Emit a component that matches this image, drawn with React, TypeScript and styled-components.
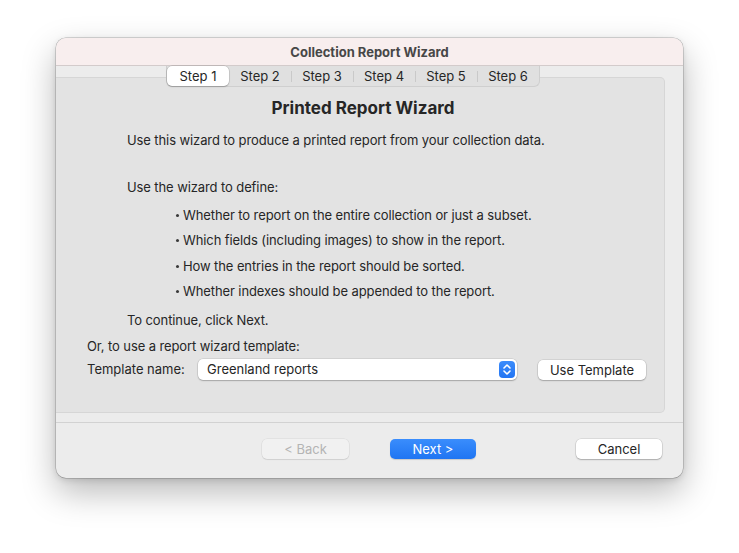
import React from "react";
import styled, { createGlobalStyle } from "styled-components";

const GlobalStyle = createGlobalStyle`
  html, body {
    margin: 0;
    padding: 0;
    background: #ffffff;
  }
  body {
    font-family: Inter, "Liberation Sans", Arial, sans-serif;
    -webkit-font-smoothing: antialiased;
  }
`;

const Page = styled.div`
  width: 739px;
  height: 553px;
  padding: 38px 0 0 56px;
  box-sizing: border-box;
`;

const Window = styled.div`
  width: 627px;
  height: 440px;
  border-radius: 10px;
  overflow: hidden;
  background: #ececec;
  display: flex;
  flex-direction: column;
  box-shadow: 0 0 0 0.5px rgba(0, 0, 0, 0.28), 0 14px 34px rgba(0, 0, 0, 0.28),
    0 2px 6px rgba(0, 0, 0, 0.12);
`;

const TitleBar = styled.div`
  height: 27px;
  flex: none;
  background: #f8eeee;
  border-bottom: 1px solid #d3cbcb;
  display: flex;
  align-items: center;
  justify-content: center;
  font-size: 13px;
  font-weight: 700;
  color: #474747;
`;

const Body = styled.div`
  flex: 1;
  display: flex;
  flex-direction: column;
`;

const TabStrip = styled.div`
  position: relative;
  z-index: 1;
  align-self: flex-start;
  margin: 0 0 -10px 110px;
  height: 20px;
  display: flex;
  align-items: center;
  background: #e0e0e0;
  border: 0.5px solid #cfcfcf;
  border-top: none;
  border-radius: 0 0 6px 6px;
`;

const Tab = styled.div<{ $active?: boolean; $sep?: boolean }>`
  position: relative;
  width: 62px;
  height: 20px;
  display: flex;
  align-items: center;
  justify-content: center;
  font-size: 13px;
  color: #262626;
  border-radius: 5px;
  background: ${(p) => (p.$active ? "#ffffff" : "transparent")};
  box-shadow: ${(p) =>
    p.$active ? "0 0 0 0.5px rgba(0,0,0,0.18), 0 1px 1.5px rgba(0,0,0,0.18)" : "none"};
  &::before {
    content: "";
    display: ${(p) => (p.$sep ? "block" : "none")};
    position: absolute;
    left: 0;
    top: 5px;
    height: 11px;
    width: 1px;
    background: #c9c9c9;
  }
`;

const Panel = styled.div`
  height: 336px;
  margin-right: 18px;
  background: #e3e3e3;
  border: 1px solid #d6d6d6;
  border-left: none;
  border-radius: 0 5px 5px 0;
  box-sizing: border-box;
  padding-top: 20px;
  display: flex;
  flex-direction: column;
`;

const Heading = styled.h1`
  margin: 0;
  height: 20px;
  line-height: 20px;
  font-size: 17px;
  font-weight: 700;
  color: #262626;
  text-align: center;
  padding-left: 6px;
`;

const Para = styled.p<{ $top: number; $indent: number }>`
  margin: ${(p) => p.$top}px 0 0 ${(p) => p.$indent}px;
  height: 16px;
  line-height: 16px;
  font-size: 13px;
  color: #262626;
  letter-spacing: -0.1px;
`;

const Bullets = styled.ul`
  list-style: none;
  margin: 12px 0 0 119px;
  padding: 0;
  display: flex;
  flex-direction: column;
  gap: 9.3px;
`;

const Bullet = styled.li`
  height: 16px;
  line-height: 16px;
  font-size: 13px;
  color: #262626;
  letter-spacing: -0.1px;
  display: flex;
  align-items: center;
  gap: 4px;
`;

const Dot = styled.span`
  width: 3px;
  height: 3px;
  border-radius: 50%;
  background: #3a3a3a;
  margin: 1px 0 0 1px;
`;

const TemplateRow = styled.div`
  margin: 5px 0 0 31px;
  display: flex;
  align-items: center;
  height: 21px;
`;

const Label = styled.span`
  font-size: 13px;
  color: #262626;
  width: 111px;
`;

const Select = styled.div`
  width: 319px;
  height: 21px;
  box-sizing: border-box;
  background: #ffffff;
  border-radius: 5px;
  box-shadow: 0 0 0 0.5px rgba(0, 0, 0, 0.14), 0 1px 1.5px rgba(0, 0, 0, 0.22);
  display: flex;
  align-items: center;
  justify-content: space-between;
  padding: 0 2px 0 9px;
  font-size: 13px;
  color: #262626;
`;

const Stepper = styled.div`
  width: 16px;
  height: 17px;
  border-radius: 4px;
  background: linear-gradient(#3b8cfb, #2375f3);
  display: flex;
  align-items: center;
  justify-content: center;
`;

const Button = styled.div<{ $width: number; $primary?: boolean; $disabled?: boolean }>`
  width: ${(p) => p.$width}px;
  height: 20px;
  box-sizing: border-box;
  border-radius: 5px;
  display: flex;
  align-items: center;
  justify-content: center;
  font-size: 13px;
  color: ${(p) => (p.$primary ? "#ffffff" : p.$disabled ? "#b4b4b4" : "#262626")};
  background: ${(p) =>
    p.$primary
      ? "linear-gradient(#3a8dfc, #1f75f2)"
      : p.$disabled
      ? "#f1f1f1"
      : "#ffffff"};
  box-shadow: ${(p) =>
    p.$primary
      ? "0 1px 1px rgba(0,0,0,0.15)"
      : p.$disabled
      ? "0 0 0 0.5px rgba(0,0,0,0.08), 0 1px 1px rgba(0,0,0,0.08)"
      : "0 0 0 0.5px rgba(0,0,0,0.14), 0 1px 1.5px rgba(0,0,0,0.22)"};
`;

const TemplateButton = styled(Button)`
  margin-left: 21px;
  margin-top: 2px;
`;

const NextButton = styled(Button)`
  margin-left: 41px;
`;

const Footer = styled.div`
  margin-top: 9px;
  border-top: 1px solid #d2d2d2;
  flex: 1;
  display: flex;
  align-items: flex-start;
  padding: 16px 21px 0 206px;
`;

const Spacer = styled.div`
  flex: 1;
`;

const steps = ["Step 1", "Step 2", "Step 3", "Step 4", "Step 5", "Step 6"];
const bullets = [
  "Whether to report on the entire collection or just a subset.",
  "Which fields (including images) to show in the report.",
  "How the entries in the report should be sorted.",
  "Whether indexes should be appended to the report.",
];

const App = () => {
  return (
    <>
      <GlobalStyle />
      <Page>
        <Window>
          <TitleBar>Collection Report Wizard</TitleBar>
          <Body>
            <TabStrip>
              {steps.map((s, i) => (
                <Tab key={s} $active={i === 0} $sep={i > 1}>
                  {s}
                </Tab>
              ))}
            </TabStrip>
            <Panel>
              <Heading>Printed Report Wizard</Heading>
              <Para $top={14} $indent={71}>
                Use this wizard to produce a printed report from your collection data.
              </Para>
              <Para $top={31} $indent={71}>
                Use the wizard to define:
              </Para>
              <Bullets>
                {bullets.map((b) => (
                  <Bullet key={b}>
                    <Dot />
                    {b}
                  </Bullet>
                ))}
              </Bullets>
              <Para $top={13} $indent={71}>
                To continue, click Next.
              </Para>
              <Para $top={10} $indent={31}>
                Or, to use a report wizard template:
              </Para>
              <TemplateRow>
                <Label>Template name:</Label>
                <Select>
                  <span>Greenland reports</span>
                  <Stepper>
                    <svg width="10" height="13" viewBox="0 0 10 13">
                      <path
                        d="M2 5 L5 2 L8 5 M2 8 L5 11 L8 8"
                        fill="none"
                        stroke="#ffffff"
                        strokeWidth="1.6"
                        strokeLinecap="round"
                        strokeLinejoin="round"
                      />
                    </svg>
                  </Stepper>
                </Select>
                <TemplateButton $width={108}>Use Template</TemplateButton>
              </TemplateRow>
            </Panel>
            <Footer>
              <Button $width={87} $disabled>
                &lt; Back
              </Button>
              <NextButton $width={86} $primary>
                Next &gt;
              </NextButton>
              <Spacer />
              <Button $width={86}>Cancel</Button>
            </Footer>
          </Body>
        </Window>
      </Page>
    </>
  );
};

export default App;
